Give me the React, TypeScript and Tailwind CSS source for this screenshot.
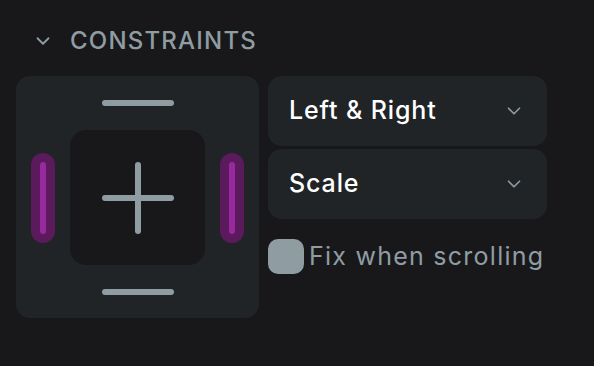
import { ChevronDown } from 'lucide-react';

const font = { fontFamily: 'Inter, "Open Sans", sans-serif' };

function Dropdown({ label }: { label: string }) {
  return (
    <div className="flex h-[70px] items-center justify-between rounded-[14px] bg-[#212427] pl-[21px] pr-[22px]">
      <span className="text-[25px] font-medium tracking-[0.035em] text-white">{label}</span>
      <ChevronDown className="h-[22px] w-[22px] text-[#8f9da3]" strokeWidth={1.8} />
    </div>
  );
}

export default function App() {
  return (
    <div className="h-[366px] w-[594px] bg-[#18181b] pl-[16px] pt-[27px]" style={font}>
      <div className="flex h-[28px] items-center gap-[16px] pl-[16px]">
        <ChevronDown className="h-[22px] w-[22px] text-[#8f9da3]" strokeWidth={2} />
        <span className="text-[24px] font-medium tracking-[0.05em] text-[#8f9da3]">CONSTRAINTS</span>
      </div>

      <div className="mt-[21px] flex gap-[9px]">
        {/* constraint widget */}
        <div className="flex h-[242px] w-[243px] flex-col items-center rounded-[14px] bg-[#212427] pt-[24px]">
          <div className="h-[6px] w-[72px] rounded-full bg-[#8f9da3]" />
          <div className="mt-[24px] flex w-full items-center justify-between px-[15px]">
            <div className="flex h-[90px] w-[24px] items-center justify-center rounded-full bg-[#5a1a5c]">
              <div className="h-[72px] w-[6px] rounded-full bg-[#99299e]" />
            </div>
            <div className="relative flex h-[135px] w-[135px] items-center justify-center rounded-[16px] bg-[#18181b]">
              <div className="absolute h-[6px] w-[72px] rounded-full bg-[#8f9da3]" />
              <div className="absolute h-[72px] w-[6px] rounded-full bg-[#8f9da3]" />
            </div>
            <div className="flex h-[90px] w-[24px] items-center justify-center rounded-full bg-[#5a1a5c]">
              <div className="h-[72px] w-[6px] rounded-full bg-[#99299e]" />
            </div>
          </div>
          <div className="mt-[24px] h-[6px] w-[72px] rounded-full bg-[#8f9da3]" />
        </div>

        <div className="flex w-[279px] flex-col">
          <Dropdown label="Left & Right" />
          <div className="mt-[3px]">
            <Dropdown label="Scale" />
          </div>
          <div className="mt-[19px] flex items-center gap-[5px]">
            <div className="h-[35px] w-[36px] rounded-[10px] bg-[#8f9da3]" />
            <span className="text-[25px] tracking-[0.05em] text-[#8f9da3]">Fix when scrolling</span>
          </div>
        </div>
      </div>
    </div>
  );
}
